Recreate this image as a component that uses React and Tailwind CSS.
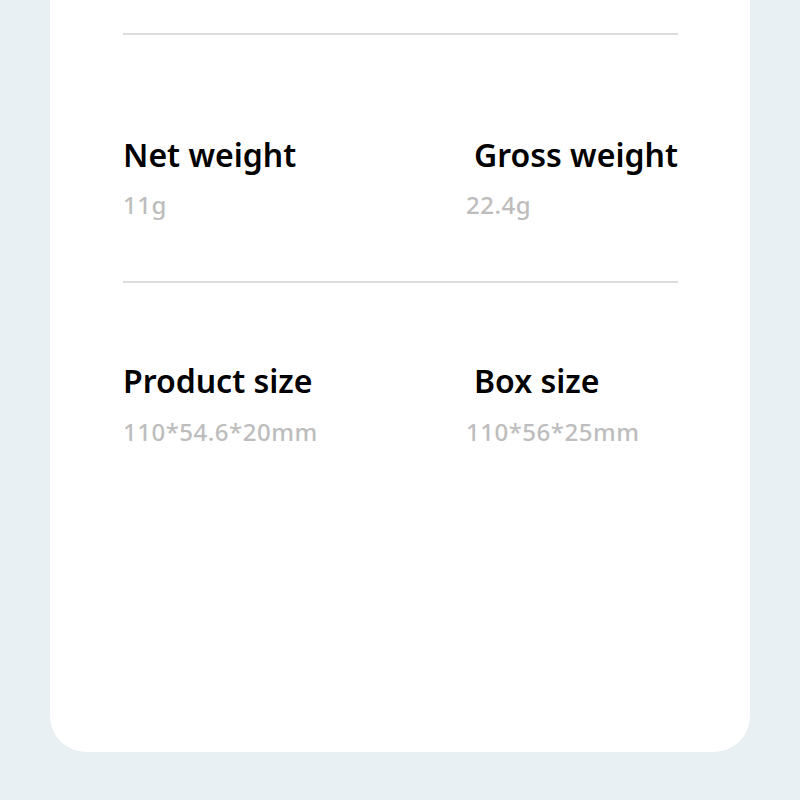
export default function App() {
  const font = { fontFamily: '"Noto Sans", "Open Sans", sans-serif' };
  return (
    <div className="w-[800px] h-[800px] bg-[#e8f0f4] px-[50px] pb-[48px]" style={font}>
      <div className="h-full bg-white rounded-b-[36px] pl-[73px] pr-[72px] pt-[33px]">
        <div className="h-[2px] bg-[#dcdcdc]" />
        <div className="grid grid-cols-[343px_1fr] pt-[100px]">
          <div>
            <div className="text-[32px] leading-[40px] font-semibold text-black whitespace-nowrap">Net weight</div>
            <div className="text-[24px] leading-[32px] font-medium text-[#bdbdbd] mt-[14px] tracking-[0.5px] whitespace-nowrap">11g</div>
          </div>
          <div>
            <div className="text-[32px] leading-[40px] font-semibold text-black ml-[8px] whitespace-nowrap">Gross weight</div>
            <div className="text-[24px] leading-[32px] font-medium text-[#bdbdbd] mt-[14px] tracking-[0.5px] whitespace-nowrap">22.4g</div>
          </div>
        </div>
        <div className="h-[2px] bg-[#dcdcdc] mt-[60px]" />
        <div className="grid grid-cols-[343px_1fr] pt-[78px]">
          <div>
            <div className="text-[32px] leading-[40px] font-semibold text-black whitespace-nowrap">Product size</div>
            <div className="text-[24px] leading-[32px] font-medium text-[#bdbdbd] mt-[15px] tracking-[0.5px] whitespace-nowrap">110*54.6*20mm</div>
          </div>
          <div>
            <div className="text-[32px] leading-[40px] font-semibold text-black ml-[8px] whitespace-nowrap">Box size</div>
            <div className="text-[24px] leading-[32px] font-medium text-[#bdbdbd] mt-[15px] tracking-[0.5px] whitespace-nowrap">110*56*25mm</div>
          </div>
        </div>
      </div>
    </div>
  );
}
